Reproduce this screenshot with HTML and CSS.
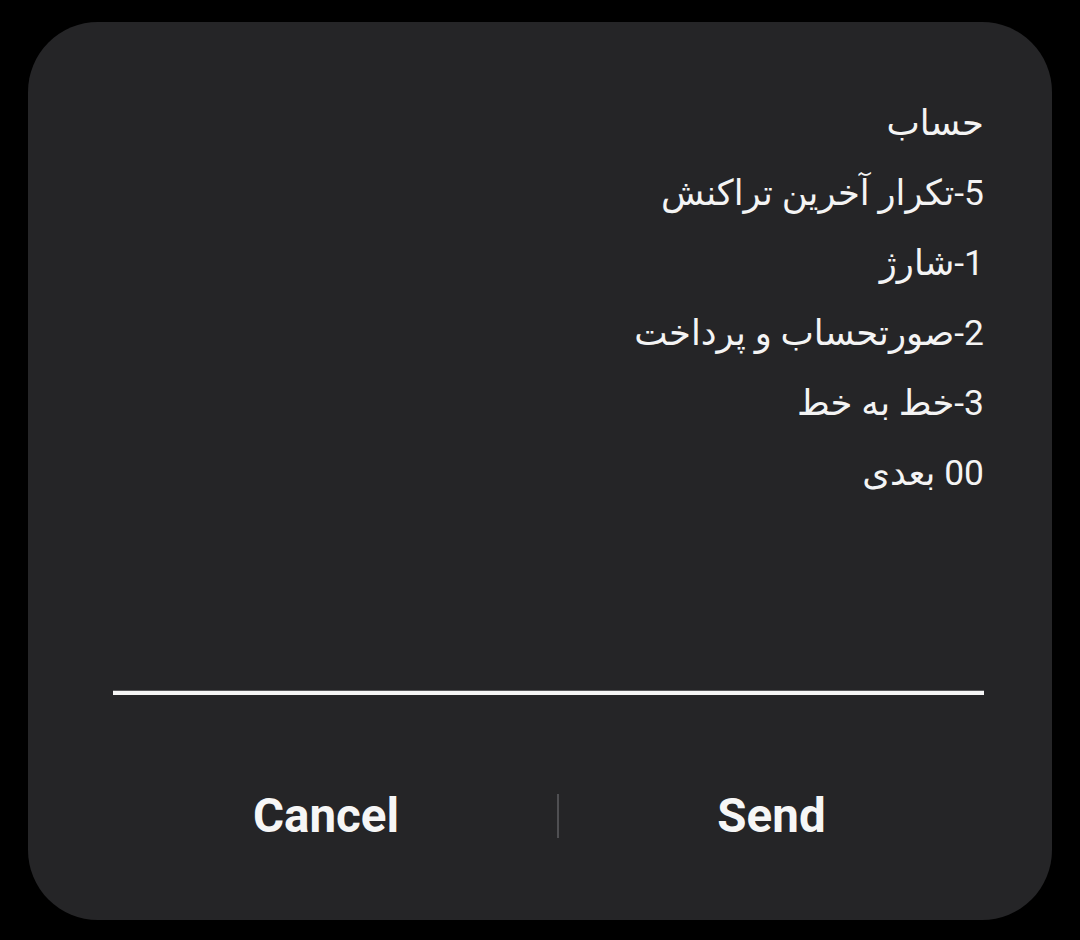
FILE: index.html
```html
<!DOCTYPE html>
<html lang="fa">
<head>
<meta charset="utf-8">
<link rel="stylesheet" href="styles.css">
</head>
<body>
<div class="dialog">
  <div class="message" dir="rtl">
    <div class="line">حساب</div>
    <div class="line">5-تکرار آخرین تراکنش</div>
    <div class="line">1-شارژ</div>
    <div class="line">2-صورتحساب و پرداخت</div>
    <div class="line">3-خط به خط</div>
    <div class="line">00 بعدی</div>
  </div>
  <div class="divider"></div>
  <div class="actions">
    <div class="btn btn-cancel">Cancel</div>
    <div class="sep"></div>
    <div class="btn">Send</div>
  </div>
</div>
</body>
</html>
```

FILE: styles.css
```css
html, body {
  margin: 0;
  padding: 0;
  background: #000;
  width: 1080px;
  height: 940px;
  overflow: hidden;
}

.dialog {
  box-sizing: border-box;
  margin: 22px 0 0 28px;
  width: 1024px;
  height: 898px;
  border-radius: 70px;
  background: #252527;
  padding: 66px 68px 0 85px;
  display: flex;
  flex-direction: column;
  color: #f4f4f4;
}

.message {
  flex: 1;
  font-family: Roboto, "DejaVu Sans", sans-serif;
  font-size: 35.4px;
  line-height: 70px;
  text-align: right;
}

.divider {
  height: 4px;
  background: #f5f5f5;
  border-top: 1px solid #5a5a5c;
}

.actions {
  box-sizing: border-box;
  height: 225px;
  padding-top: 16px;
  display: grid;
  grid-template-columns: 444px 2px 1fr;
  align-items: center;
}

.btn {
  text-align: center;
  font-family: Roboto, "Liberation Sans", sans-serif;
  font-weight: 700;
  font-size: 47.5px;
  color: #f6f6f6;
}

.btn-cancel {
  padding-right: 18px;
}

.sep {
  width: 2px;
  height: 44px;
  background: #4f4f52;
}
```
